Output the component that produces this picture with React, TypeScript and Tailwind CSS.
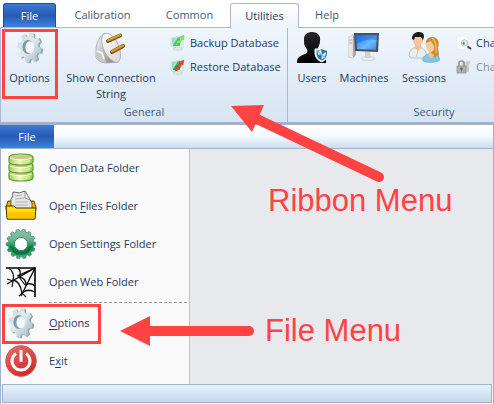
import React from "react";

function gearPoints(cx: number, cy: number, rx: number, ry: number, inner: number, teeth: number) {
  const points: string[] = [];
  const step = (Math.PI * 2) / teeth;
  const profile: [number, number][] = [
    [-0.34, inner],
    [-0.2, 1],
    [0.2, 1],
    [0.34, inner],
  ];
  for (let i = 0; i < teeth; i++) {
    for (const [offset, scale] of profile) {
      const a = step * (i + offset) - Math.PI / 2 + 0.2;
      points.push(`${(cx + Math.cos(a) * rx * scale).toFixed(2)},${(cy + Math.sin(a) * ry * scale).toFixed(2)}`);
    }
  }
  return points.join(" ");
}

function SilverGear({ id }: { id: string }) {
  return (
    <svg width="32" height="32" viewBox="0 0 32 32" aria-hidden="true">
      <defs>
        <linearGradient id={id} x1="0" y1="0" x2="1" y2="1">
          <stop offset="0" stopColor="#c3d3d9" />
          <stop offset="0.45" stopColor="#e1ebee" />
          <stop offset="1" stopColor="#9fb6bf" />
        </linearGradient>
      </defs>
      <polygon points={gearPoints(17, 16.4, 12.2, 15.2, 0.76, 8)} fill="#8ea7b0" />
      <polygon points={gearPoints(15.4, 15.8, 12, 15.2, 0.77, 8)} fill={`url(#${id})`} />
      <ellipse cx="14" cy="15" rx="5.6" ry="7" fill="#7f98a3" />
      <ellipse cx="15.8" cy="15.4" rx="4.4" ry="6.2" fill="#f3f8fc" />
    </svg>
  );
}

function PlugIcon() {
  return (
    <svg width="32" height="32" viewBox="0 0 32 32" aria-hidden="true">
      <defs>
        <linearGradient id="plug" x1="0" y1="0.2" x2="1" y2="0.9">
          <stop offset="0" stopColor="#f2f2f2" />
          <stop offset="0.5" stopColor="#b5b5b5" />
          <stop offset="1" stopColor="#7b7b7b" />
        </linearGradient>
        <linearGradient id="plug-face" x1="0" y1="0" x2="1" y2="1">
          <stop offset="0" stopColor="#ffffff" />
          <stop offset="1" stopColor="#d6d6d6" />
        </linearGradient>
      </defs>
      <path d="M10 1C5 4 1 10 1 18V26C3 29 7 31 12 31L23 30Z" fill="url(#plug)" stroke="#9a9a9a" strokeWidth="0.7" />
      <path d="M1 18L8 20L11 31Q4 30 1 26Z" fill="#c9c9c9" />
      <path d="M2 19L7 21L9 27" fill="none" stroke="#fafafa" strokeWidth="1.5" />
      <path d="M9 2C13 0 18 3 22 10C26 18 27 27 23 30C19 31 13 27 9 18C6 11 6 4 9 2Z" fill="url(#plug-face)" stroke="#a6a6a6" strokeWidth="0.8" />
      <path d="M13 9L25 3.500M17 20L28 14" stroke="#7b4a0f" strokeWidth="4" strokeLinecap="round" />
      <path d="M13 8.500L25 3M17 19.500L28 13.500" stroke="#dd9c36" strokeWidth="2" strokeLinecap="round" />
    </svg>
  );
}

function DatabaseMark({ arrow }: { arrow: "backup" | "restore" }) {
  const backup = arrow === "backup";
  return (
    <svg width="16" height="16" viewBox="0 0 16 16" aria-hidden="true">
      <path d="M1 3L10 1L13 3V12L10 14L3 12L1 11Z" fill="#e8f1ee" stroke="#c3d2cc" strokeWidth="0.7" />
      <path d="M2 4L10 2V11L3 11Z" fill={backup ? "#4fc08c" : "#35a97c"} />
      <path d="M2 4L8 2.5L3 10Z" fill="#a0e2bb" />
      <ellipse cx="8" cy="14" rx="5" ry="1.3" fill="#e4e9e7" stroke="#c0c8c5" strokeWidth="0.5" />
      {backup ? (
        <path d="M6 11L7 5L9 6L11 3L10 2L14 0L14 5L12 4L10 8L8 8Z" fill="#8ee44d" stroke="#5abf3d" strokeWidth="0.4" />
      ) : (
        <path d="M5 12L6 7L8 8L10 4L9 3L14 1L13 6L12 5L10 9L8 9L7 12Z" fill="#ec4a20" stroke="#8d3516" strokeWidth="0.4" />
      )}
    </svg>
  );
}

function UsersIcon() {
  return (
    <svg width="32" height="32" viewBox="0 0 32 32" aria-hidden="true">
      <defs>
        <linearGradient id="silhouette" x1="0" y1="0" x2="0" y2="1">
          <stop stopColor="#262626" />
          <stop offset="1" stopColor="#000000" />
        </linearGradient>
      </defs>
      <path d="M1 31C1 25 4 24 9 22C12 21 12 19 10 16C8 14 8 11 8 7C8 2 12 0 16 0C22 0 25 4 24 9C24 14 21 16 21 19C21 22 29 23 30 27V31Z" fill="url(#silhouette)" />
      <path d="M19 17Q23 18 25.500 15Q28 18 32 17V22Q31 28 26 30Q20 28 19 22Z" fill="#ffffff" stroke="#e5eef4" />
      <path d="M20.500 18.500Q24 18.500 25.500 17Q28 18.500 31 18.500V22Q30 27 26 28.500Q21 27 20.500 22Z" fill="#2c78a8" />
      <path d="M21.500 19.500L25 18L26 22L22 23ZM26 23L29.500 20L30 22L27 27L25.500 27Z" fill="#e4f4fc" />
      <path d="M22 19L29 26" stroke="#86c5e8" strokeWidth="1.2" />
    </svg>
  );
}

function MachinesIcon() {
  return (
    <svg width="32" height="32" viewBox="0 0 32 32" aria-hidden="true">
      <defs>
        <linearGradient id="screen" x1="0" y1="0" x2="1" y2="1">
          <stop offset="0" stopColor="#1473df" />
          <stop offset="0.6" stopColor="#70bbff" />
          <stop offset="1" stopColor="#2388f5" />
        </linearGradient>
      </defs>
      <path d="M0 5L5 3V26L0 25Z" fill="#e7e7e7" stroke="#c4c4c4" strokeWidth="0.6" />
      <path d="M5 3L8 5V23L5 26Z" fill="#a9a9a9" />
      <path d="M1 8H4M1 11H4" stroke="#aaa" />
      <ellipse cx="20" cy="26.500" rx="7" ry="2" fill="#efefef" stroke="#c6c6c6" strokeWidth="0.8" />
      <path d="M17 20H22L23 26H17Z" fill="#ced1d4" />
      <path d="M6 1H31L30 20L7 19Z" fill="#4a5057" />
      <path d="M8 3H29L28 18L9 17Z" fill="url(#screen)" />
      <path d="M8 12Q18 6 29 8V3H8Z" fill="#136ade" opacity=".5" />
    </svg>
  );
}

function SessionsIcon() {
  return (
    <svg width="32" height="32" viewBox="0 0 32 32" aria-hidden="true">
      <path d="M1 24C1 19 4 16 9 15C15 15 18 18 19 25L16 26H3Z" fill="#eceeee" stroke="#b1b4b6" strokeWidth="0.8" />
      <path d="M7 11H13V16L10 19L7 16Z" fill="#efbe91" />
      <path d="M5 5H15V10Q13 14 10 14Q5 13 5 8Z" fill="#f0c7a0" />
      <path d="M4 7C4 2 7 0 11 0C16 0 17 4 15 8L13 5H7L6 8Z" fill="#181818" />
      <path d="M10 18L8 25" stroke="#c4c8ca" />
      <path d="M18 13C17 8 20 5 24 5C30 5 32 10 30 16L31 23L26 26L21 20Z" fill="#cf8b31" />
      <path d="M24 6Q29 9 28 21" fill="none" stroke="#e9bd68" strokeWidth="1.5" />
      <path d="M18 11L23 9L26 14V18L22 21Q18 18 18 13Z" fill="#f5cda0" />
      <path d="M15 29C14 25 18 22 21 22L25 26L30 23L32 28C27 31 20 31 15 29Z" fill="#83c5e8" stroke="#5e9fbf" strokeWidth="0.6" />
      <path d="M20 22L22 20L26 23L25 26H22Z" fill="#efc096" />
    </svg>
  );
}

function SearchPageIcon() {
  return (
    <svg width="16" height="16" viewBox="0 0 16 16" aria-hidden="true">
      <path d="M1 1H10L12 3V14H1Z" fill="#fafcfc" stroke="#e6ebed" strokeWidth=".7" />
      <circle cx="8.500" cy="8" r="3.2" fill="#e5f0ec" stroke="#aeb9bb" strokeWidth="0.8" />
      <path d="M6 9L8 6L9 9L8 10Z" fill="#619d7a" />
      <path d="M11.500 11.500L15 14" stroke="#343c40" strokeWidth="1.8" />
    </svg>
  );
}

function LockIcon() {
  return (
    <svg width="16" height="16" viewBox="0 0 16 16" aria-hidden="true">
      <path d="M6 3L15 2L13 6V13H7Z" fill="#cacbcc" />
      <path d="M3 7V4Q3 2 5.500 2Q8 2 8 4V7" fill="none" stroke="#909193" strokeWidth="1.5" />
      <rect x="1" y="7" width="9" height="7" fill="#b2b3b4" stroke="#858585" strokeWidth=".7" />
      <circle cx="5.500" cy="9.700" r="1.3" fill="#666" />
      <path d="M5.500 10V12.500" stroke="#666" />
    </svg>
  );
}

function DataIcon() {
  return (
    <svg width="32" height="32" viewBox="0 0 32 32" aria-hidden="true">
      <defs>
        <linearGradient id="data">
          <stop stopColor="#a8cd61" />
          <stop offset=".45" stopColor="#f3f8c4" />
          <stop offset="1" stopColor="#91c34a" />
        </linearGradient>
      </defs>
      {[19, 11, 3].map((y) => (
        <g key={y}>
          <path d={`M4 ${y + 2}Q5 ${y - 1} 16 ${y - 1}Q27 ${y - 1} 28 ${y + 2}V${y + 7}Q27 ${y + 10} 16 ${y + 10}Q5 ${y + 10} 4 ${y + 7}Z`} fill="url(#data)" stroke="#57a022" strokeWidth="1.2" />
          <path d={`M5 ${y + 2}Q7 ${y} 16 ${y}Q25 ${y} 27 ${y + 2}Q25 ${y + 4} 16 ${y + 4}Q7 ${y + 4} 5 ${y + 2}`} fill="#c9cc8a" />
          <path d={`M5 ${y + 3}Q16 ${y + 7} 27 ${y + 3}`} fill="none" stroke="#f7fad9" strokeWidth="1" />
          <path d={`M18 ${y + 6}L25 ${y + 5}V${y + 7}L18 ${y + 8}Z`} fill="#c8fb8b" />
        </g>
      ))}
    </svg>
  );
}

function FilesIcon() {
  return (
    <svg width="32" height="32" viewBox="0 0 32 32" aria-hidden="true">
      <path d="M3 11H29L31 17L29 29H3L1 17Z" fill="#f0b000" stroke="#332700" strokeWidth="0.8" />
      <path d="M6 9Q8 8 8 2Q15 4 20 1L27 13V19H6Z" fill="#e5e6e7" stroke="#444" strokeWidth="0.8" />
      <path d="M20 1V8L25 10Z" fill="#f7f7f7" stroke="#777" strokeWidth="0.7" />
      <path d="M10 6L17 5M10 9L19 8M10 12L23 12M10 15L23 15" stroke="#aaa" strokeWidth="0.9" />
      <path d="M1 16H9L11 18H31L30 29H2Z" fill="#ffdf10" stroke="#2b2100" strokeWidth="0.9" />
      <path d="M2.500 22H30L29 28.500H3Z" fill="#ffc400" />
    </svg>
  );
}

function GreenGear() {
  return (
    <svg width="32" height="32" viewBox="0 0 32 32" aria-hidden="true">
      <defs>
        <linearGradient id="green" x1="0" y1="0" x2="0" y2="1">
          <stop stopColor="#8fbfae" />
          <stop offset=".35" stopColor="#6cb693" />
          <stop offset=".6" stopColor="#16854e" />
          <stop offset="1" stopColor="#4fb17e" />
        </linearGradient>
      </defs>
      <polygon points={gearPoints(16, 16, 14.8, 14.8, 0.86, 14)} fill="url(#green)" stroke="#4b9572" strokeWidth=".8" strokeLinejoin="round" />
      <path d="M5 17Q10 22 16 23Q22 22 27 17Q26 27 16 27Q6 27 5 17" fill="#0b7743" />
      <circle cx="16" cy="16" r="6.6" fill="#fcfcfc" stroke="#3d9168" />
    </svg>
  );
}

function WebIcon() {
  return (
    <svg width="32" height="32" viewBox="0 0 32 32" aria-hidden="true">
      <path d="M1 2H30V31" fill="none" stroke="#050505" strokeWidth="1.6" />
      <path d="M30 2L2 18M30 2L16 30M30 2L12 10" fill="none" stroke="#050505" strokeWidth="1.3" />
      <path d="M4 2Q10 7 8 14Q15 15 17 27Q22 22 30 26M13 2Q17 6 14 11Q21 12 21 19Q25 16 30 20" fill="none" stroke="#111" strokeWidth="1.3" />
      <path d="M2 13L8 15L7 21M14 11L20 19M14 30L17 27L21 31" stroke="#161616" strokeWidth="1.2" fill="none" />
    </svg>
  );
}

function PowerIcon() {
  return (
    <svg width="32" height="32" viewBox="0 0 32 32" aria-hidden="true">
      <defs>
        <linearGradient id="power" x1="0" y1="0" x2=".6" y2="1">
          <stop stopColor="#e8706b" />
          <stop offset="1" stopColor="#cf2a2a" />
        </linearGradient>
      </defs>
      <circle cx="16" cy="16" r="15.4" fill="url(#power)" stroke="#d45850" strokeWidth="0.8" />
      <path d="M11 8.500A9 9 0 1 0 21 8.500M16 5V17" fill="none" stroke="#fffafa" strokeWidth="3" />
    </svg>
  );
}

function LargeButton({ icon, children, className = "" }: { icon: React.ReactNode; children: React.ReactNode; className?: string }) {
  return (
    <button type="button" className={`relative flex shrink-0 flex-col items-center gap-1.5 pt-1 ${className}`}>
      {icon}
      <span className="leading-4">{children}</span>
    </button>
  );
}

function SmallButton({ icon, children, muted = false }: { icon: React.ReactNode; children: React.ReactNode; muted?: boolean }) {
  return (
    <button type="button" className={`flex h-6 items-center gap-1 whitespace-nowrap ${muted ? "text-[#858a90]" : ""}`}>
      {icon}
      <span>{children}</span>
    </button>
  );
}

function MenuItem({ icon, children, highlighted = false }: { icon: React.ReactNode; children: React.ReactNode; highlighted?: boolean }) {
  return (
    <button type="button" role="menuitem" className="relative flex h-[38px] w-full items-center gap-3 pl-1 text-left">
      {icon}
      <span>{children}</span>
      {highlighted && <span className="absolute top-0 left-px h-10 w-[99px] border-3 border-[#ff4343]" />}
    </button>
  );
}

export default function App() {
  return (
    <main className="relative w-full overflow-hidden bg-white font-['Open_Sans',sans-serif] text-[11px] leading-4 text-[#1e3960]">
      <section aria-label="Ribbon">
        <nav role="tablist" aria-label="Ribbon tabs" className="flex h-7 items-end border-b border-[#a8b9d1] pl-[3px] text-[#42597a]">
          <button role="tab" type="button" className="h-6 w-[53px] rounded-t-[3px] border border-b-0 border-[#204c99] bg-linear-to-b from-[#3c7bd4] via-[#2859b5] to-[#3f82df] text-white">File</button>
          <button role="tab" type="button" className="h-6 w-[93px]">Calibration</button>
          <button role="tab" type="button" className="h-6 w-[81px]">Common</button>
          <button role="tab" type="button" aria-selected="true" className="-mb-px h-[25px] w-[69px] rounded-t-[3px] border border-b-0 border-[#a8b9d1] bg-linear-to-b from-white to-[#edf4fc] text-[#1e3960]">Utilities</button>
          <button role="tab" type="button" className="h-6 w-14">Help</button>
        </nav>
        <div className="flex h-[94px] border-l border-[#a8b9d1] bg-linear-to-b from-[#eff6fe] to-[#d8e4f2]">
          <div className="flex w-[287px] shrink-0 flex-col border-r border-[#a8b9d1]">
            <div className="flex h-[76px] items-start">
              <LargeButton className="w-[57px]" icon={<SilverGear id="ribbon-gear" />}>
                Options
                <span className="absolute top-px left-px h-[70px] w-14 border-3 border-[#ff4343]" />
              </LargeButton>
              <LargeButton className="w-[106px]" icon={<PlugIcon />}>Show Connection<br />String</LargeButton>
              <div className="flex flex-col pt-[3px] pl-1.5">
                <SmallButton icon={<DatabaseMark arrow="backup" />}>Backup Database</SmallButton>
                <SmallButton icon={<DatabaseMark arrow="restore" />}>Restore Database</SmallButton>
              </div>
            </div>
            <span className="text-center text-[#42597a]">General</span>
          </div>
          <div className="flex w-[292px] shrink-0 flex-col">
            <div className="flex h-[76px] items-start pl-1">
              <LargeButton className="w-10" icon={<UsersIcon />}>Users</LargeButton>
              <LargeButton className="w-16" icon={<MachinesIcon />}>Machines</LargeButton>
              <LargeButton className="w-14" icon={<SessionsIcon />}>Sessions</LargeButton>
              <div className="flex flex-col pt-[3px] pl-1">
                <SmallButton icon={<SearchPageIcon />}>Cha</SmallButton>
                <SmallButton muted icon={<LockIcon />}>Cha</SmallButton>
              </div>
            </div>
            <span className="text-center text-[#42597a]">Security</span>
          </div>
        </div>
      </section>

      <section aria-label="File menu" className="border-t-3 border-r border-b border-[#a0b2cc]">
        <div className="flex h-6 border-b border-[#a3b6cf] bg-linear-to-b from-white via-[#f3f9fd] to-[#ccdcf1]">
          <button type="button" className="w-[54px] bg-linear-to-b from-[#3c7bd4] via-[#2859b5] to-[#3f82df] text-white">File</button>
        </div>
        <div className="border-l border-[#a0b2cc] bg-[#e8e9ed]">
          <div role="menu" aria-label="File" className="w-[189px] border-r border-[#c2c4c8] bg-[#fafafa] pb-1">
            <MenuItem icon={<DataIcon />}>Open Data Folder</MenuItem>
            <MenuItem icon={<FilesIcon />}>Open <u className="underline-offset-2">F</u>iles Folder</MenuItem>
            <MenuItem icon={<GreenGear />}>Open Settings Folder</MenuItem>
            <MenuItem icon={<WebIcon />}>Open Web Folder</MenuItem>
            <hr className="mt-px mr-0.5 mb-px ml-12 border-dashed border-[#999]" />
            <MenuItem highlighted icon={<SilverGear id="menu-gear" />}><u className="underline-offset-2">O</u>ptions</MenuItem>
            <MenuItem icon={<PowerIcon />}>E<u className="underline-offset-2">x</u>it</MenuItem>
          </div>
        </div>
        <div className="border-l border-[#a0b2cc] bg-[#f2f5fa] px-px pb-px">
          <div role="status" className="h-[19px] border border-[#9ab3cf] bg-linear-to-b from-[#e8f2fc] to-[#c5d7ee]" />
        </div>
      </section>

      <svg className="pointer-events-none absolute top-0 left-0" width="494" height="404" viewBox="0 0 494 404" aria-hidden="true">
        <path d="M379 177L257 119" stroke="#ff4343" strokeWidth="10" strokeLinecap="round" />
        <path d="M231 106L264 105L252 132Z" fill="#ff4343" />
        <path d="M249 331H148" stroke="#ff4343" strokeWidth="10" strokeLinecap="round" />
        <path d="M120 331L150 316V346Z" fill="#ff4343" />
      </svg>
      <span className="absolute top-[183px] left-[268px] font-['Liberation_Sans',sans-serif] text-[31px] leading-9 whitespace-nowrap text-[#ff4343]">Ribbon Menu</span>
      <span className="absolute top-[313px] left-[265px] font-['Liberation_Sans',sans-serif] text-[31px] leading-9 whitespace-nowrap text-[#ff4343]">File Menu</span>
    </main>
  );
}
